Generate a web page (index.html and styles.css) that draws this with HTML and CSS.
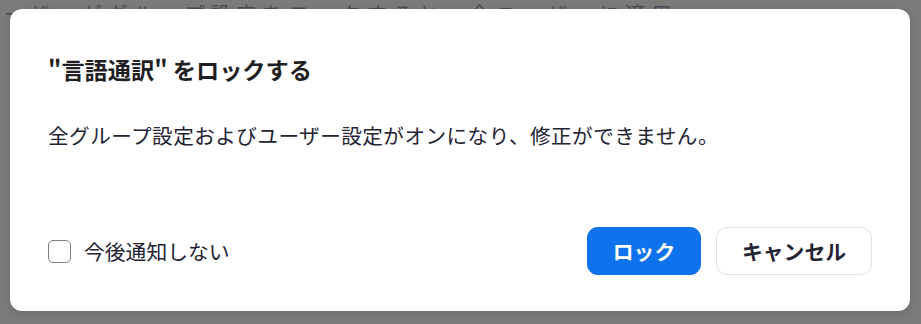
FILE: index.html
```html
<!DOCTYPE html>
<html lang="ja">
<head>
<meta charset="utf-8">
<title>言語通訳をロック</title>
<link rel="stylesheet" href="styles.css">
</head>
<body>
<div class="backdrop">
  <div class="behind">
    <p class="behind-top">ーザーがグループ設定をロックすると、全ユーザーに適用</p>
  </div>
  <div class="dialog" role="dialog">
    <h2 class="title">"言語通訳" をロックする</h2>
    <p class="message">全グループ設定およびユーザー設定がオンになり、修正ができません。</p>
    <div class="footer">
      <label class="check">
        <span class="box"></span>
        <span class="check-label">今後通知しない</span>
      </label>
      <div class="actions">
        <button class="btn btn-primary">ロック</button>
        <button class="btn btn-secondary">キャンセル</button>
      </div>
    </div>
  </div>
</div>
</body>
</html>
```

FILE: styles.css
```css
* { box-sizing: border-box; }
html, body {
  margin: 0;
  padding: 0;
  width: 921px;
  height: 324px;
  overflow: hidden;
}
body {
  font-family: "Noto Sans CJK JP", "Noto Sans", sans-serif;
  background: #7b7b7b;
}
.backdrop {
  position: relative;
  width: 921px;
  height: 324px;
  padding: 9px 11px 0 10px;
}
.behind {
  position: absolute;
  inset: 0;
  color: #4a4d57;
  font-size: 20px;
}
.behind p { margin: 0; position: absolute; white-space: nowrap; }
.behind-top { left: 4px; top: 2px; line-height: 24px; letter-spacing: 6px; }
.dialog {
  position: relative;
  z-index: 1;
  width: 900px;
  height: 302px;
  background: #ffffff;
  border-radius: 12px;
  padding: 44px 38px 36px 38px;
  display: flex;
  flex-direction: column;
  box-shadow: 0 2px 8px rgba(0,0,0,0.12);
}
.title {
  margin: 0;
  font-size: 23.2px;
  line-height: 32px;
  font-weight: 700;
  color: #1f1f24;
}
.message {
  margin: 35px 0 0 0;
  font-size: 20.6px;
  line-height: 30px;
  letter-spacing: 0.47px;
  color: #232333;
}
.footer {
  margin-top: auto;
  display: flex;
  align-items: center;
  justify-content: space-between;
}
.check {
  display: flex;
  align-items: center;
  gap: 13px;
}
.box {
  width: 23px;
  height: 23px;
  border: 1.3px solid #7d7f86;
  border-radius: 5px;
  background: #fff;
}
.check-label {
  font-size: 20.8px;
  line-height: 28px;
  color: #232333;
}
.actions {
  display: flex;
  gap: 15px;
}
.btn {
  height: 48px;
  border-radius: 11px;
  font-family: inherit;
  font-size: 20.8px;
  font-weight: 700;
  line-height: 1;
  cursor: pointer;
}
.btn-primary {
  width: 114px;
  background: #0e72ed;
  color: #ffffff;
  border: none;
}
.btn-secondary {
  width: 156px;
  background: #ffffff;
  color: #232333;
  border: 1px solid #dfe3e8;
}
```
